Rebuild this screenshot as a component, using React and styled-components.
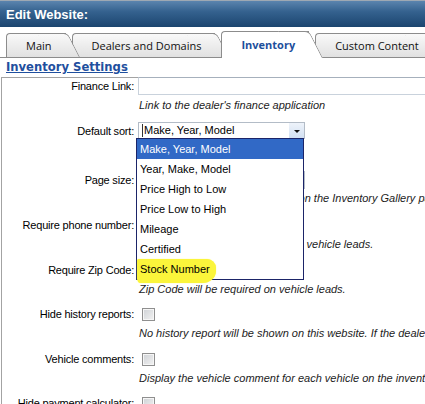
import React from 'react';
import styled, { createGlobalStyle } from 'styled-components';

const Global = createGlobalStyle`
  html, body { margin: 0; padding: 0; background: #fff; overflow: hidden; }
  body { font-family: "Liberation Sans", Arial, sans-serif; }
`;

const Page = styled.div`
  width: 425px;
  height: 404px;
  overflow: hidden;
  background: #fff;
`;

const TitleBar = styled.div`
  height: 26px;
  border-top: 1px solid #9ea8b3;
  background: linear-gradient(#5b84ae 0%, #35628f 40%, #1b456f 100%);
  color: #fff;
  font: bold 13px "Liberation Sans", Arial, sans-serif;
  display: flex;
  align-items: center;
  padding-left: 6px;
`;

const TabBar = styled.div`
  display: flex;
  align-items: flex-end;
  margin-top: 4px;
  height: 26px;
  padding-left: 6px;
  border-bottom: 1px solid #8c8c8c;
`;

const tabBg = (active) =>
  active ? '#ffffff' : 'linear-gradient(#f9f9f9, #e1e1e1)';

const Tab = styled.div`
  position: relative;
  box-sizing: border-box;
  height: ${(p) => (p.$active ? 27 : 24)}px;
  margin-bottom: ${(p) => (p.$active ? -1 : 0)}px;
  margin-left: ${(p) => (p.$first ? 0 : -8)}px;
  padding: 0 28px 0 20px;
  z-index: ${(p) => p.$z};
  display: flex;
  align-items: center;
  font-family: "Open Sans", "Noto Sans", sans-serif;
  font-size: 11px;
  font-weight: ${(p) => (p.$active ? 700 : 400)};
  color: ${(p) => (p.$active ? '#1d4f9c' : '#111')};
  white-space: nowrap;

  &::before {
    content: '';
    position: absolute;
    left: 0;
    top: 0;
    bottom: 0;
    right: 14px;
    border: 1px solid #8c8c8c;
    border-right: none;
    border-bottom: none;
    border-top-left-radius: 4px;
    background: ${(p) => tabBg(p.$active)};
  }
  &::after {
    content: '';
    position: absolute;
    top: 0;
    bottom: 0;
    right: 0;
    width: 30px;
    border: 1px solid #8c8c8c;
    border-left: none;
    border-bottom: none;
    border-top-right-radius: 5px;
    transform: skewX(27deg);
    transform-origin: right bottom;
    background: ${(p) => tabBg(p.$active)};
  }
`;

const TabLabel = styled.span`
  position: relative;
  z-index: 1;
  margin-top: ${(p) => (p.$active ? -1 : 0)}px;
`;

const SectionTitle = styled.div`
  margin: 2px 0 0 6px;
  font: bold 11.6px "DejaVu Sans", Verdana, sans-serif;
  line-height: 14px;
  color: #1f4f9e;
  text-decoration: underline;
`;

const Panel = styled.div`
  margin: 3px 0 0 1px;
  border-left: 1px solid #a3a3a3;
  border-top: 1px solid #a3a3a3;
  height: 400px;
`;

const Field = styled.div`
  display: grid;
  grid-template-columns: 132px 1fr;
  column-gap: 4px;
  align-items: center;
  align-content: start;
  height: ${(p) => p.$h}px;
  margin-top: ${(p) => p.$mt || 0}px;
`;

const Label = styled.div`
  text-align: right;
  font-size: 11px;
  letter-spacing: -0.2px;
  line-height: 14px;
  color: #000;
  white-space: nowrap;
`;

const Help = styled.div`
  grid-column: 2;
  margin-top: ${(p) => p.$gap}px;
  padding-left: 1px;
  font-size: 11px;
  font-style: italic;
  line-height: 14px;
  color: #1c1c1c;
  white-space: nowrap;
`;

const TextInput = styled.div`
  box-sizing: border-box;
  width: 300px;
  height: 18px;
  background: #fff;
  border: 1px solid #c9d2dc;
  border-top-color: #a6b0bc;
`;

const SelectBox = styled.div`
  position: relative;
  box-sizing: border-box;
  width: 167px;
  height: ${(p) => p.$h || 17}px;
  border: 1px solid #b3bcc7;
  background: #fff;
  display: flex;
  align-items: center;
  font-size: 11px;
`;

const SelectValue = styled.span`
  margin-left: 3px;
  padding-left: 1px;
  border-left: 1px solid #333;
  line-height: 13px;
  color: #000;
`;

const ArrowButton = styled.span`
  margin-left: auto;
  width: 15px;
  height: 100%;
  background: linear-gradient(#eef3fa, #d2e0f2);
  display: flex;
  align-items: center;
  justify-content: center;

  &::after {
    content: '';
    border-left: 3px solid transparent;
    border-right: 3px solid transparent;
    border-top: 3px solid #111;
    margin-top: 1px;
  }
`;

const DropList = styled.div`
  position: absolute;
  top: 15px;
  left: -3px;
  width: 168px;
  box-sizing: border-box;
  border: 1px solid #1b2468;
  background: #fff;
  z-index: 10;
`;

const Option = styled.div`
  position: relative;
  height: 20px;
  line-height: 20px;
  padding-left: 3px;
  font-size: 11px;
  color: ${(p) => (p.$selected ? '#fff' : '#000')};
  background: ${(p) => (p.$selected ? '#3169c6' : 'transparent')};
  white-space: nowrap;
`;

const OptionText = styled.span`
  position: relative;
  z-index: 2;
`;

const Highlight = styled.span`
  position: absolute;
  left: 0;
  top: 0;
  width: 79px;
  height: 24px;
  background: #fbf53b;
  box-shadow: 0 0 1px 0 #fbf53b;
  border-radius: 2px 9px 14px 3px / 2px 9px 12px 6px;
  z-index: 1;
`;

const Checkbox = styled.span`
  box-sizing: border-box;
  display: block;
  width: 13px;
  height: 13px;
  margin-left: 4px;
  border: 1px solid #8f8f8f;
  background: linear-gradient(135deg, #cfd2d6, #f2f2f2);
  box-shadow: inset 0 0 0 1px #f6f6f6;
`;

const sortOptions = [
  'Make, Year, Model',
  'Year, Make, Model',
  'Price High to Low',
  'Price Low to High',
  'Mileage',
  'Certified',
  'Stock Number',
];

const tabs = ['Main', 'Dealers and Domains', 'Inventory', 'Custom Content'];

export default function App() {
  return (
    <Page>
      <Global />
      <TitleBar>Edit Website:</TitleBar>
      <TabBar>
        {tabs.map((t, i) => {
          const active = t === 'Inventory';
          return (
            <Tab key={t} $first={i === 0} $active={active} $z={active ? 20 : 10 - i}>
              <TabLabel $active={active}>{t}</TabLabel>
            </Tab>
          );
        })}
      </TabBar>
      <SectionTitle>Inventory Settings</SectionTitle>
      <Panel>
        <Field $h={45} $mt={-1}>
          <Label>Finance Link:</Label>
          <TextInput />
          <Help $gap={3}>Link to the dealer's finance application</Help>
        </Field>
        <Field $h={49}>
          <Label>Default sort:</Label>
          <SelectBox>
            <SelectValue>Make, Year, Model</SelectValue>
            <ArrowButton />
            <DropList>
              {sortOptions.map((o, i) => (
                <Option key={o} $selected={i === 0}>
                  {o === 'Stock Number' && <Highlight />}
                  <OptionText>{o}</OptionText>
                </Option>
              ))}
            </DropList>
          </SelectBox>
        </Field>
        <Field $h={47}>
          <Label>Page size:</Label>
          <SelectBox $h={18}>
            <ArrowButton />
          </SelectBox>
          <Help $gap={2}>Number of vehicles to be shown on the Inventory Gallery page.</Help>
        </Field>
        <Field $h={45}>
          <Label>Require phone number:</Label>
          <Checkbox />
          <Help $gap={5}>Phone number will be required on vehicle leads.</Help>
        </Field>
        <Field $h={44}>
          <Label>Require Zip Code:</Label>
          <Checkbox />
          <Help $gap={5}>Zip Code will be required on vehicle leads.</Help>
        </Field>
        <Field $h={45}>
          <Label>Hide history reports:</Label>
          <Checkbox />
          <Help $gap={5}>No history report will be shown on this website. If the dealer has a report provider it is ignored.</Help>
        </Field>
        <Field $h={44}>
          <Label>Vehicle comments:</Label>
          <Checkbox />
          <Help $gap={5}>Display the vehicle comment for each vehicle on the inventory pages.</Help>
        </Field>
        <Field $h={45}>
          <Label>Hide payment calculator:</Label>
          <Checkbox />
        </Field>
      </Panel>
    </Page>
  );
}
